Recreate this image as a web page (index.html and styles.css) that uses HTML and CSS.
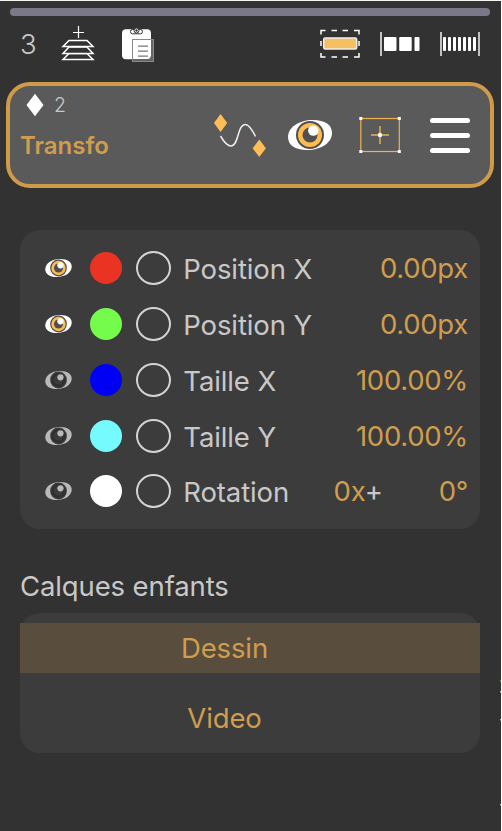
FILE: index.html
```html
<!DOCTYPE html>
<html lang="fr">

<head>
    <meta charset="utf-8">
    <title>Transfo</title>
    <link rel="stylesheet" href="styles.css">
</head>

<body>
    <svg class="defs">
        <symbol id="eye" viewBox="0 0 44 30">
            <path class="eye-white" d="M0 17C0 8 10 0 25 0C37 0 44 5 44 13C44 22 34 30 19 30C7 30 0 25 0 17Z" />
            <circle class="eye-ring" cx="22" cy="15" r="14" />
            <circle class="eye-iris" cx="22" cy="15" r="12" />
            <circle class="eye-pupil" cx="22" cy="15" r="7.5" />
            <circle class="eye-light" cx="25.3" cy="10.6" r="5.2" />
        </symbol>
    </svg>
    <div class="handle"></div>
    <div class="toolbar">
        <span class="count">3</span>
        <svg class="icon-layers" width="34" height="36" viewBox="0 0 34 36">
            <path d="M17.5 0V12M12 6.5H23" />
            <path class="layer" d="M8 27.5H26L32 33.5H2Z" />
            <path class="layer" d="M8 21H26L32 27.5H2Z" />
            <path class="layer" d="M8 14.5H26L32 20.5H2Z" />
        </svg>
        <svg class="icon-paste" width="34" height="36" viewBox="0 0 34 36">
            <rect x="1" y="3.300" width="29" height="30" rx="4" fill="#fff" />
            <rect x="9.500" y="3.500" width="12" height="4.300" rx="2" fill="#fff" stroke="#333" />
            <circle cx="15.500" cy="4.500" r="2.500" fill="#fff" stroke="#333" />
            <circle cx="15.500" cy="4.500" r="1.200" fill="#333" />
            <path d="M30 14H32.500V35.500H12V33.300H27Q30 33 30 30Z" fill="#666" />
            <rect x="11.500" y="13.500" width="21" height="22" fill="none" stroke="#888" />
            <path d="M17 20.200H27M17 25.200H27M17 30.200H27" stroke="#777" stroke-width="1.200" />
        </svg>
        <div class="toolbar-right">
            <svg width="40" height="30" viewBox="0 0 40 30">
                <path d="M1 5.500V1.500H5.500M11.500 1.500H17M22.500 1.500H28M34 1.500H39V5.500M39 12V17M39 24V28H34M28 28H22.500M17 28H11.500M5.500 28H1V24M1 17V12" fill="none" stroke="#fff" stroke-width="1.500" />
                <rect x="3.700" y="9" width="33" height="11" rx="1.500" fill="#f5c062" stroke="#eee" stroke-width="1.500" />
            </svg>
            <svg width="40" height="24" viewBox="0 0 40 24" fill="#fff">
                <rect x=".3" width="1.400" height="24" />
                <rect x="4" y="5" width="12.500" height="14" rx="1" />
                <rect x="19.200" y="5" width="12.500" height="14" rx="1" />
                <rect x="34.500" y="5" width="5" height="14" rx="1" />
            </svg>
            <svg width="40" height="24" viewBox="0 0 40 24" fill="#fff">
                <rect x=".3" width="1.400" height="24" />
                <rect x="3" y="5" width="3" height="14" rx="1" />
                <rect x="8" y="5" width="3" height="14" rx="1" />
                <rect x="13" y="5" width="3" height="14" rx="1" />
                <rect x="18" y="5" width="3" height="14" rx="1" />
                <rect x="23" y="5" width="3" height="14" rx="1" />
                <rect x="28" y="5" width="3" height="14" rx="1" />
                <rect x="33" y="5" width="3" height="14" rx="1" />
                <rect x="38.300" width="1.400" height="24" />
            </svg>
        </div>
    </div>
    <div class="transfo">
        <div class="transfo-info">
            <div class="keys">
                <svg width="18" height="24" viewBox="0 0 18 24">
                    <path d="M9 .7L17.500 12L9 23.300L.5 12Z" fill="#fff" />
                </svg>
                <span>2</span>
            </div>
            <div class="name">Transfo</div>
        </div>
        <svg class="icon-curve" width="52" height="44" viewBox="0 0 52 44">
            <path d="M6.500 22C10 28 13 32 17 32C25 32 23 10.500 31.500 10.500C35 10.500 38 15.500 41.500 22.500" fill="none" stroke="#eee" stroke-width="1.500" />
            <path d="M6.600 0L13.200 9L6.600 18L0 9Z" fill="#ffbe55" />
            <path d="M45.300 25.500L51.900 34.300L45.300 43L38.700 34.300Z" fill="#ffbe55" />
        </svg>
        <svg class="eye eye-big"><use href="#eye" /></svg>
        <svg class="icon-box" width="42" height="36" viewBox="0 0 42 36">
            <rect x="1.800" y="1.500" width="38.500" height="33" fill="none" stroke="#f0b250" stroke-width="1.200" />
            <path d="M21 9V27M12 18H30" stroke="#f0b250" stroke-width="1.400" />
            <path d="M.3 0H3.300V3H.3ZM38.800 0H41.800V3H38.800ZM.3 33H3.300V36H.3ZM38.800 33H41.800V36H38.800Z" fill="#fff" />
            <circle cx="21" cy="18" r="2.200" fill="#fff" />
        </svg>
        <div class="menu">
            <i></i>
            <i></i>
            <i></i>
        </div>
    </div>
    <div class="panel">
        <div class="row">
            <svg class="eye"><use href="#eye" /></svg>
            <i class="dot red"></i>
            <i class="ring"></i>
            <span class="label">Position X</span>
            <span class="value">0.00px</span>
        </div>
        <div class="row">
            <svg class="eye"><use href="#eye" /></svg>
            <i class="dot green"></i>
            <i class="ring"></i>
            <span class="label">Position Y</span>
            <span class="value">0.00px</span>
        </div>
        <div class="row">
            <svg class="eye off"><use href="#eye" /></svg>
            <i class="dot blue"></i>
            <i class="ring"></i>
            <span class="label">Taille X</span>
            <span class="value">100.00%</span>
        </div>
        <div class="row">
            <svg class="eye off"><use href="#eye" /></svg>
            <i class="dot cyan"></i>
            <i class="ring"></i>
            <span class="label">Taille Y</span>
            <span class="value">100.00%</span>
        </div>
        <div class="row">
            <svg class="eye off"><use href="#eye" /></svg>
            <i class="dot white"></i>
            <i class="ring"></i>
            <span class="label">Rotation</span>
            <span class="value turns">0x<b>+</b></span>
            <span class="value">0°</span>
        </div>
    </div>
    <h2>Calques enfants</h2>
    <div class="list">
        <div class="item selected">Dessin</div>
        <div class="item">Video</div>
    </div>
    <svg class="edge" width="1" height="831">
        <path d="M0 680H1V682H0Z" fill="#4f9a2c" />
        <path d="M0 691H1V692.500H0ZM0 719H1V720.500H0ZM0 804H1V805.500H0Z" fill="#bbb" />
    </svg>
</body>

</html>
```
FILE: styles.css
```css
* {
    box-sizing: border-box;
}

html {
    background-color: #fff;
}

body {
    position: relative;
    margin: 0;
    width: 501px;
    height: 831px;
    padding-top: 7px;
    border-top: 1px solid #f4f6f4;
    background-color: #323232;
    color: #c8c8c8;
    font: 27.5px/34px Inter, "Noto Sans", sans-serif;
    letter-spacing: -.12px;
    overflow: hidden;
}

svg {
    display: block;
    flex: none;
}

.defs {
    width: 0;
    height: 0;
}

.edge {
    position: absolute;
    top: -1px;
    right: 0;
}

.handle {
    height: 8px;
    margin: 0 11px 0 10px;
    border-radius: 4px;
    background-color: #7b788a;
}

.toolbar {
    display: flex;
    align-items: center;
    height: 56px;
    padding: 0 21px 0 20px;
}

.count {
    width: 41px;
    font-weight: 300;
}

.icon-layers {
    fill: none;
    stroke: #fff;
    stroke-width: 1.2;
}

.icon-layers .layer {
    fill: #323232;
    stroke-width: 1.5;
}

.icon-paste {
    margin: 0 0 0 26px;
}

.toolbar-right {
    display: flex;
    align-items: center;
    gap: 20px;
    margin-left: auto;
}

.transfo {
    display: flex;
    height: 106px;
    margin: 10px 7px 0 6px;
    border: 4px solid #d09b49;
    border-radius: 24px;
    background-color: #5a5a5a;
}

.transfo-info {
    width: 204px;
    padding: 7px 0 0 11px;
}

.keys {
    display: flex;
    align-items: center;
    gap: 10px;
    height: 24px;
    padding-left: 5px;
    font-size: 19.5px;
    font-weight: 300;
}

.name {
    margin: 12px 0 0 -1px;
    color: #d09d4e;
    font-size: 24px;
    line-height: 34px;
    font-weight: 600;
    letter-spacing: 0;
}

.icon-curve {
    margin-top: 28px;
}

.eye {
    --white: #fff;
    --iris: #fdbb50;
    --pupil: #505050;
    width: 27px;
    height: 18px;
}

.eye.off {
    --white: #b9b9b9;
    --iris: #303034;
    --pupil: #3c3c3c;
}

.eye-white,
.eye-light {
    fill: var(--white);
}

.eye-ring,
.eye-pupil {
    fill: var(--pupil);
}

.eye-iris {
    fill: var(--iris);
}

.eye-big {
    width: 44px;
    height: 30px;
    margin: 34px 0 0 22px;
}

.icon-box {
    margin: 31px 0 0 27px;
}

.menu {
    display: flex;
    flex-direction: column;
    gap: 9.5px;
    margin: 31.5px 0 0 29px;
}

.menu i {
    width: 40px;
    height: 5.5px;
    border-radius: 3px;
    background-color: #fff;
}

.panel {
    height: 299px;
    margin: 42px 21px 0 20px;
    padding: 10.3px 12px 0 24.5px;
    border-radius: 20px;
    background-color: #3c3c3c;
}

.row {
    display: flex;
    align-items: center;
    height: 55.8px;
}

.dot {
    width: 32px;
    height: 32px;
    margin: 0 14px 0 18.3px;
    border-radius: 50%;
}

.red {
    background-color: #eb3323;
}

.green {
    background-color: #75fb4c;
}

.blue {
    background-color: #0000f5;
}

.cyan {
    background-color: #75fbfd;
}

.white {
    background-color: #fff;
}

.ring {
    width: 35px;
    height: 34px;
    border: 2px solid #d4d4d4;
    border-radius: 50%;
}

.label {
    margin: 2px 0 0 12.5px;
}

.value {
    margin-left: auto;
    color: #d09d4e;
    letter-spacing: -.3px;
}

.value b {
    color: #c8c8c8;
    font-weight: 400;
}

.turns {
    margin-left: 44.5px;
}

h2 {
    margin: 40px 0 10px 20px;
    font-size: 27.5px;
    font-weight: 400;
    line-height: 34px;
}

.list {
    display: flex;
    flex-direction: column;
    gap: 20px;
    height: 140px;
    margin: 0 21px 0 20px;
    padding-top: 10px;
    border-radius: 20px;
    background-color: #3c3c3c;
}

.item {
    padding-right: 51px;
    color: #d09d4e;
    line-height: 50px;
    text-align: center;
}

.selected {
    background-color: #594e3d;
}
```
